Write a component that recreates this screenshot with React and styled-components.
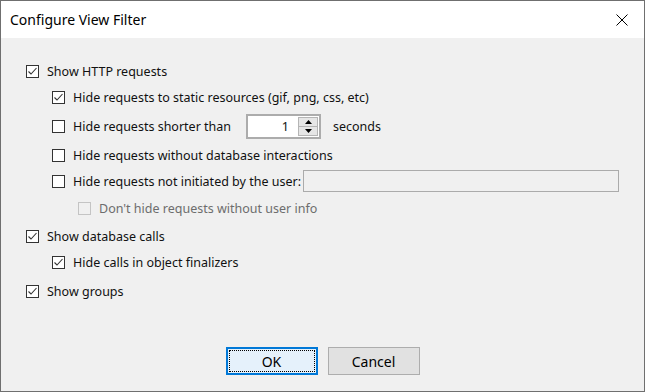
import React from "react";
import styled, { createGlobalStyle } from "styled-components";

const GlobalStyle = createGlobalStyle`
  html, body {
    margin: 0;
    padding: 0;
    background: #ffffff;
  }
  * {
    box-sizing: border-box;
  }
`;

const font = `"Noto Sans", "Open Sans", "Liberation Sans", sans-serif`;

const CloseIcon = () => (
  <svg width="12" height="12" viewBox="0 0 12 12">
    <path d="M0.5 0.5 L11.5 11.5 M11.5 0.5 L0.5 11.5" stroke="#000" strokeWidth="1" />
  </svg>
);

const CheckMark = ({ color }) => (
  <svg width="11" height="11" viewBox="0 0 11 11">
    <polyline
      points="1.5,5.5 4,8 9.5,2"
      fill="none"
      stroke={color}
      strokeWidth="1.1"
    />
  </svg>
);

const Arrow = ({ up }) => (
  <svg width="7" height="4" viewBox="0 0 7 4">
    <polygon points={up ? "3.5,0 7,4 0,4" : "0,0 7,0 3.5,4"} fill="#000" />
  </svg>
);

const CheckBox = ({ checked, disabled }) => (
  <Box $disabled={disabled}>
    {checked && <CheckMark color={disabled ? "#bcbcbc" : "#333"} />}
  </Box>
);

const Option = ({ level = 0, mt = 0, checked, disabled, label, labelWidth, children }) => (
  <Row $level={level} $mt={mt}>
    <CheckBox checked={checked} disabled={disabled} />
    <Label $disabled={disabled} $width={labelWidth}>
      {label}
    </Label>
    {children}
  </Row>
);

const App = () => {
  return (
    <>
      <GlobalStyle />
      <Window>
        <TitleBar>
          <Title>Configure View Filter</Title>
          <CloseButton>
            <CloseIcon />
          </CloseButton>
        </TitleBar>
        <Body>
          <Options>
            <Option checked label="Show HTTP requests" />
            <Option
              level={1}
              checked
              label="Hide requests to static resources (gif, png, css, etc)"
            />
            <Option level={1} mt={3} label="Hide requests shorter than" labelWidth={173}>
              <Spinner>
                <SpinValue>1</SpinValue>
                <SpinButtons>
                  <SpinButton>
                    <Arrow up />
                  </SpinButton>
                  <SpinButton>
                    <Arrow />
                  </SpinButton>
                </SpinButtons>
              </Spinner>
              <Suffix>seconds</Suffix>
            </Option>
            <Option level={1} mt={3} label="Hide requests without database interactions" />
            <Option
              level={1}
              label="Hide requests not initiated by the user:"
              labelWidth={230}
            >
              <TextField />
            </Option>
            <Option level={2} mt={1} disabled label="Don't hide requests without user info" />
            <Option checked mt={2} label="Show database calls" />
            <Option level={1} checked label="Hide calls in object finalizers" />
            <Option checked mt={3} label="Show groups" />
          </Options>
          <Footer>
            <Button $primary>
              <FocusRing>OK</FocusRing>
            </Button>
            <Button>Cancel</Button>
          </Footer>
        </Body>
      </Window>
    </>
  );
};

const Window = styled.div`
  width: 645px;
  height: 392px;
  display: flex;
  flex-direction: column;
  border: 1px solid #6f6f6f;
  background: #f0f0f0;
  font-family: ${font};
  color: #000;
`;

const TitleBar = styled.div`
  height: 37px;
  flex: none;
  display: flex;
  align-items: center;
  justify-content: space-between;
  background: #ffffff;
`;

const Title = styled.div`
  padding-left: 9px;
  font-size: 14px;
  color: #000;
`;

const CloseButton = styled.div`
  width: 44px;
  height: 37px;
  display: flex;
  align-items: center;
  justify-content: center;
`;

const Body = styled.div`
  flex: 1;
  display: flex;
  flex-direction: column;
  justify-content: space-between;
  padding: 20px 0 16px;
`;

const Options = styled.div`
  display: flex;
  flex-direction: column;
`;

const Row = styled.div`
  height: 26px;
  display: flex;
  align-items: center;
  margin-top: ${(p) => p.$mt}px;
  padding-left: ${(p) => 25 + p.$level * 26}px;
  font-size: 12.5px;
  color: #111;
`;

const Box = styled.div`
  width: 13px;
  height: 13px;
  flex: none;
  display: flex;
  align-items: center;
  justify-content: center;
  border: 1px solid ${(p) => (p.$disabled ? "#c4c4c4" : "#333333")};
  background: ${(p) => (p.$disabled ? "#f0f0f0" : "#ffffff")};
`;

const Label = styled.span`
  margin-left: 8px;
  white-space: nowrap;
  color: ${(p) => (p.$disabled ? "#6d6d6d" : "#111")};
  width: ${(p) => (p.$width ? `${p.$width}px` : "auto")};
  flex: none;
`;

const Spinner = styled.div`
  width: 75px;
  height: 25px;
  display: flex;
  align-items: stretch;
  border: 2px solid #acacac;
  background: #ffffff;
`;

const SpinValue = styled.div`
  flex: 1;
  display: flex;
  align-items: center;
  justify-content: flex-end;
  padding-right: 9px;
  font-size: 12.5px;
`;

const SpinButtons = styled.div`
  width: 20px;
  margin: 1px 1px 1px 0;
  display: flex;
  flex-direction: column;
`;

const SpinButton = styled.div`
  flex: 1;
  display: flex;
  align-items: center;
  justify-content: center;
  background: #e6e6e6;
  border: 1px solid #b5b5b5;
  & + & {
    border-top: none;
  }
`;

const Suffix = styled.span`
  margin-left: 12px;
`;

const TextField = styled.div`
  width: 316px;
  height: 22px;
  border: 1px solid #ababab;
  background: #f0f0f0;
`;

const Footer = styled.div`
  display: flex;
  justify-content: center;
  gap: 10px;
`;

const Button = styled.div`
  width: 92px;
  height: 28px;
  display: flex;
  align-items: center;
  justify-content: center;
  font-size: 14px;
  color: #000;
  background: ${(p) => (p.$primary ? "#e5f1fb" : "#e1e1e1")};
  border: ${(p) => (p.$primary ? "2px solid #0078d7" : "1px solid #adadad")};
  padding: ${(p) => (p.$primary ? "1px" : "0")};
`;

const FocusRing = styled.div`
  width: 100%;
  height: 100%;
  display: flex;
  align-items: center;
  justify-content: center;
  border: 1px dotted #000;
`;

export default App;
